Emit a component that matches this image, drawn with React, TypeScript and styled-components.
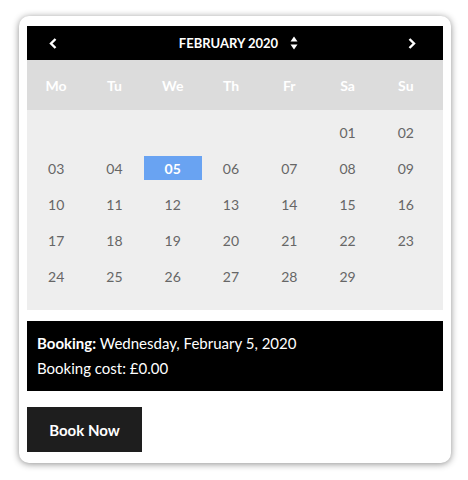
import React from 'react'
import styled, { createGlobalStyle } from 'styled-components'

const GlobalStyle = createGlobalStyle`
  html, body {
    margin: 0;
    padding: 0;
    background: #ffffff;
  }
  body {
    font-family: Lato, "Open Sans", sans-serif;
  }
`

const weekdays = ['Mo', 'Tu', 'We', 'Th', 'Fr', 'Sa', 'Su']

// February 2020 starts on a Saturday
const buildWeeks = (): (number | null)[][] => {
  const cells: (number | null)[] = [null, null, null, null, null]
  for (let d = 1; d <= 29; d++) cells.push(d)
  while (cells.length % 7 !== 0) cells.push(null)
  const weeks: (number | null)[][] = []
  for (let i = 0; i < cells.length; i += 7) weeks.push(cells.slice(i, i + 7))
  return weeks
}

const pad = (n: number) => (n < 10 ? `0${n}` : `${n}`)

const ChevronLeft = () => (
  <svg width="8" height="11" viewBox="0 0 8 11">
    <path d="M6.5 1 L2 5.5 L6.5 10" fill="none" stroke="#fff" strokeWidth="2.4" />
  </svg>
)

const ChevronRight = () => (
  <svg width="8" height="11" viewBox="0 0 8 11">
    <path d="M1.5 1 L6 5.5 L1.5 10" fill="none" stroke="#fff" strokeWidth="2.4" />
  </svg>
)

const UpDown = () => (
  <svg width="8" height="14" viewBox="0 0 8 14">
    <path d="M4 0.5 L7.5 5.5 L0.5 5.5 Z" fill="#fff" />
    <path d="M4 13.5 L7.5 8.5 L0.5 8.5 Z" fill="#fff" />
  </svg>
)

export default function App() {
  const weeks = buildWeeks()
  const selected = 5

  return (
    <>
      <GlobalStyle />
      <Page>
        <Card>
          <Calendar>
            <MonthBar>
              <NavButton>
                <ChevronLeft />
              </NavButton>
              <MonthTitle>
                FEBRUARY 2020
                <SelectArrows>
                  <UpDown />
                </SelectArrows>
              </MonthTitle>
              <NavButton>
                <ChevronRight />
              </NavButton>
            </MonthBar>
            <WeekdayRow>
              {weekdays.map((w) => (
                <Weekday key={w}>{w}</Weekday>
              ))}
            </WeekdayRow>
            <DaysArea>
              {weeks.map((week, i) => (
                <WeekRow key={i}>
                  {week.map((day, j) => (
                    <DayCell key={j}>
                      {day !== null && <Day $selected={day === selected}>{pad(day)}</Day>}
                    </DayCell>
                  ))}
                </WeekRow>
              ))}
            </DaysArea>
          </Calendar>
          <BookingInfo>
            <InfoLine>
              <strong>Booking:</strong> Wednesday, February 5, 2020
            </InfoLine>
            <InfoLine>Booking cost: £0.00</InfoLine>
          </BookingInfo>
          <BookButton>Book Now</BookButton>
        </Card>
      </Page>
    </>
  )
}

const Page = styled.div`
  padding: 16px 17px 17px 19px;
`

const Card = styled.div`
  width: 432px;
  box-sizing: border-box;
  padding: 10px 8px 11px 8px;
  background: #ffffff;
  border-radius: 10px;
  box-shadow: 0 1px 7px rgba(0, 0, 0, 0.45);
  display: flex;
  flex-direction: column;
`

const Calendar = styled.div`
  display: flex;
  flex-direction: column;
`

const MonthBar = styled.div`
  height: 34px;
  background: #000000;
  display: flex;
  align-items: center;
  justify-content: space-between;
  padding: 0 27px 0 22px;
`

const NavButton = styled.div`
  display: flex;
  align-items: center;
  cursor: pointer;
`

const MonthTitle = styled.div`
  display: flex;
  align-items: center;
  gap: 12px;
  margin-left: 12px;
  color: #ffffff;
  font-size: 13px;
  font-weight: 700;
`

const SelectArrows = styled.span`
  display: flex;
  align-items: center;
`

const WeekdayRow = styled.div`
  height: 50px;
  background: #dcdcdc;
  display: grid;
  grid-template-columns: repeat(7, 1fr);
  padding-right: 8px;
  align-items: center;
`

const Weekday = styled.div`
  text-align: center;
  color: #ffffff;
  font-size: 14px;
  font-weight: 700;
`

const DaysArea = styled.div`
  background: #eeeeee;
  padding: 4px 8px 16px 0;
  display: flex;
  flex-direction: column;
`

const WeekRow = styled.div`
  height: 36px;
  display: grid;
  grid-template-columns: repeat(7, 1fr);
  align-items: center;
`

const DayCell = styled.div`
  display: flex;
  justify-content: center;
`

const Day = styled.div<{ $selected: boolean }>`
  width: 58px;
  height: 24px;
  display: flex;
  align-items: center;
  justify-content: center;
  font-size: 14px;
  color: ${({ $selected }) => ($selected ? '#ffffff' : '#666666')};
  font-weight: ${({ $selected }) => ($selected ? 700 : 400)};
  background: ${({ $selected }) => ($selected ? '#69a3f2' : 'transparent')};
`

const BookingInfo = styled.div`
  margin-top: 11px;
  height: 70px;
  box-sizing: border-box;
  background: #000000;
  color: #ffffff;
  padding: 10px 10px;
  display: flex;
  flex-direction: column;
  font-size: 15px;

  strong {
    font-weight: 700;
  }
`

const InfoLine = styled.div`
  line-height: 25px;
`

const BookButton = styled.button`
  margin-top: 16px;
  width: 115px;
  height: 45px;
  background: #1e1e1e;
  color: #ffffff;
  border: none;
  font-family: Lato, "Open Sans", sans-serif;
  font-size: 15px;
  font-weight: 700;
  cursor: pointer;
  padding: 0;
`
